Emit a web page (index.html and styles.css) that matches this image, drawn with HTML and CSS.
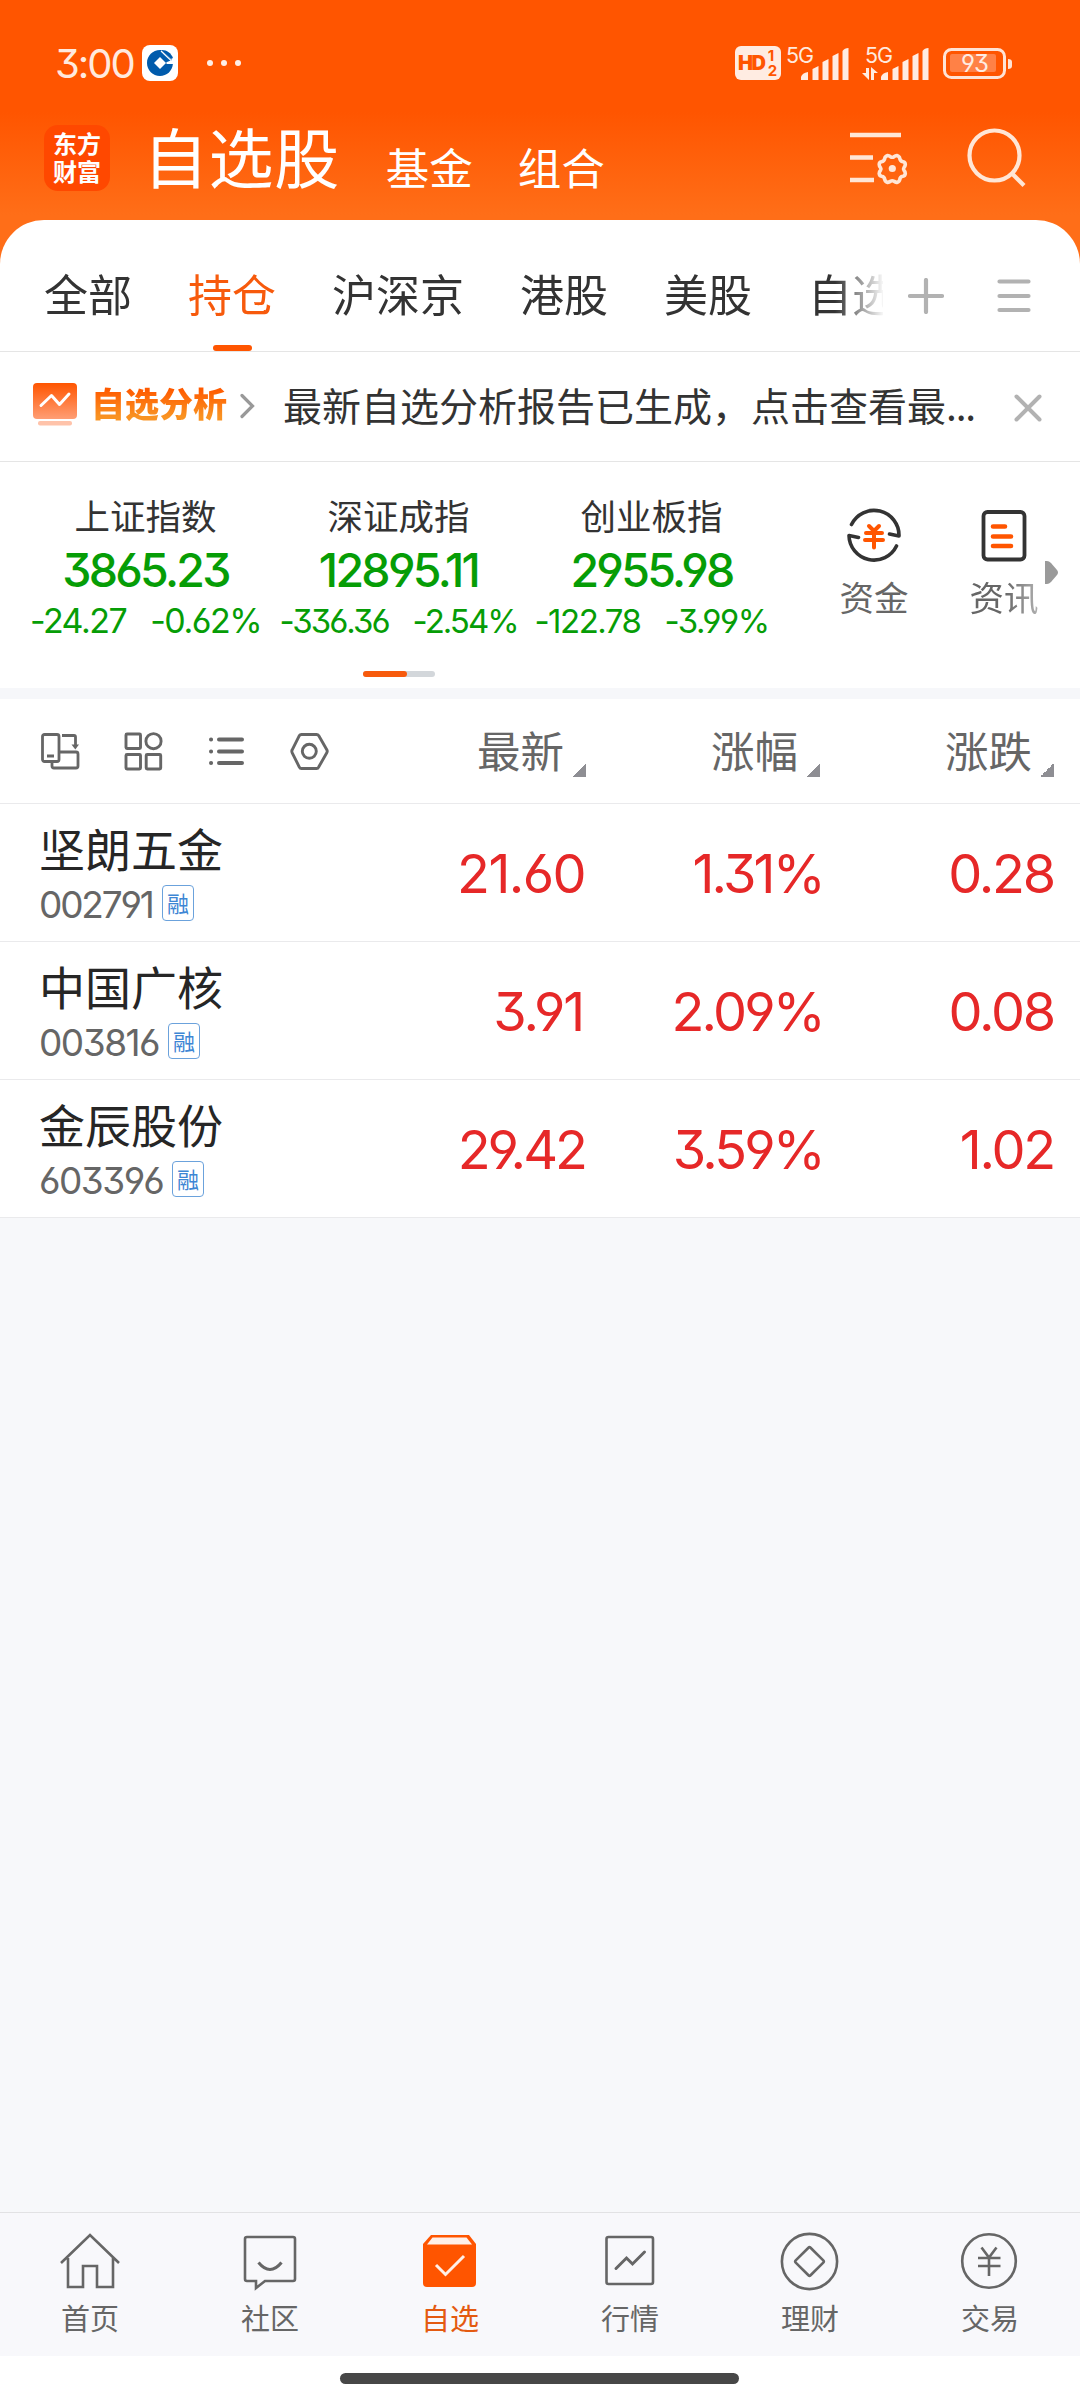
FILE: index.html
```html
<!DOCTYPE html>
<html lang="zh-CN">
<head>
<meta charset="utf-8">
<title>自选股</title>
<link rel="stylesheet" href="styles.css">
</head>
<body>
<div class="app">
  <header class="top">
    <div class="status">
      <span class="clock num">3:00</span>
      <svg class="bank" width="36" height="36" viewBox="0 0 36 36"><rect width="36" height="36" rx="8" fill="#fff"/><path fill="#005bac" d="M18 5C10.800 5 5 10.800 5 18s5.800 13 13 13c6.800 0 12.300-5 12.900-12H25l-1-1 1-1 5-2-11-10z"/><path fill="#005bac" d="M20 5c5 0 9 3 11 8l-2 1-10-9z"/><path d="M19 6l10 9.500" stroke="#fff" stroke-width="1.200"/><path fill="#fff" d="M18 12l6 6-6 6-6-6z"/></svg>
      <svg class="more" width="35" height="6" viewBox="0 0 35 6" fill="#fff" opacity=".9"><circle cx="3" cy="3" r="3"/><circle cx="17" cy="3" r="3"/><circle cx="31" cy="3" r="3"/></svg>
      <div class="signals">
        <div class="hd num"><b>HD</b><span><i>1</i><i>2</i></span></div>
        <div class="net"><span class="num">5G</span><svg width="64" height="34" viewBox="0 0 64 34" fill="#ffece2"><path d="M15 33v-3q1-4 7-5v8zM26.500 33V22l6-3v14zM36.500 33V15l6-3v21zM46.500 33V9l6-3v27zM56.500 33V4q2-3 6-3v32z"/></svg></div>
        <div class="net net2"><span class="num">5G</span><svg width="68" height="34" viewBox="0 0 68 34" fill="#ffece2"><path d="M19 33v-3q1-4 7-5v8zM30.500 33V22l6-3v14zM40.500 33V15l6-3v21zM50.500 33V9l6-3v27zM60.500 33V4q2-3 6-3v32z"/><path d="M4 21h3v12L0 26h4zM9 33h3v-7h4l-7-6z"/></svg></div>
        <svg class="battery" width="70" height="32" viewBox="0 0 70 32"><rect x="1.500" y="1.500" width="60" height="28" rx="7" fill="none" stroke="#ffe3d5" stroke-width="3"/><rect x="7" y="6" width="46" height="18" rx="2" fill="#ff8146"/><path d="M65 11q4 0 4 3v4q0 3-4 3z" fill="#ffe3d5"/><text x="31.500" y="24" text-anchor="middle" class="num pct">93</text></svg>
      </div>
    </div>
    <div class="titlebar">
      <div class="logo"><span>东方</span><span>财富</span></div>
      <h1>自选股</h1>
      <span class="sub s1">基金</span>
      <span class="sub s2">组合</span>
      <svg class="filter" width="60" height="56" viewBox="0 0 60 56" fill="none" stroke="#ffe6d6" stroke-width="4.400"><path d="M0 5h51M0 27.500h23M0 50h24"/><path stroke-width="4" stroke-linejoin="round" d="M37.500 25q1.500 0 3 1.300 2 1.300 4 0 1.500-1.300 3-1.300 3 1 3.300 3 .3 3.500 3.700 4 2.500.5 2.500 3-.2 2-1.500 3.500-1 1.500 0 3 1.500 1.500 1.500 3.500-.2 2.500-2.700 3-3.300.5-3.500 4-.3 2-3.300 3-1.500-.2-3-1.400-2-1.200-4 0-1.500 1.200-3 1.400-3-1-3.300-3-.2-3.500-3.500-4-2.500-.5-2.700-3 0-2 1.500-3.500 1-1.500 0-3-1.500-1.500-1.500-3.500 0-2.500 2.500-3 3.400-.5 3.700-4 .3-2 3.300-3z" transform="translate(4 3) scale(.9)"/><circle cx="42.300" cy="38.500" r="3.600" fill="#ffe6d6" stroke="none"/></svg>
      <svg class="search" width="60" height="60" viewBox="0 0 60 60" fill="none" stroke="#ffe6d6" stroke-width="4.200"><circle cx="27.500" cy="27.500" r="25"/><path d="M44.500 45L57 57.500"/></svg>
    </div>
  </header>

  <main>
    <section class="sheet">
      <nav class="tabs">
        <div class="tablist"><span>全部</span><span class="on">持仓</span><span>沪深京</span><span>港股</span><span>美股</span><span>自选</span></div>
        <svg class="plus" width="36" height="36" viewBox="0 0 36 36" stroke="#b2b2b2" stroke-width="4.200" stroke-linecap="round"><path d="M18 2v32M2 18h32"/></svg>
        <svg class="menu" width="34" height="34" viewBox="0 0 34 34" stroke="#b2b2b2" stroke-width="4.200" stroke-linecap="round"><path d="M2.500 2.500h29M2.500 17h29M2.500 31h29"/></svg>
      </nav>
      <div class="notice">
        <svg width="44" height="43" viewBox="0 0 44 43"><defs><linearGradient id="g" x1="0" y1="0" x2="0" y2="1"><stop offset="0" stop-color="#ff5500"/><stop offset="1" stop-color="#ff9e75"/></linearGradient></defs><rect width="44" height="36" rx="4" fill="url(#g)"/><path d="M8 22.500L18.500 12.500l8 9L36 11" fill="none" stroke="#fff" stroke-width="3" stroke-linecap="round" stroke-linejoin="round"/><rect x="5" y="38" width="34" height="4.500" rx="2" fill="#ffc3aa"/></svg>
        <b>自选分析</b>
        <svg class="chev" width="15" height="26" viewBox="0 0 15 26" fill="none" stroke="#999" stroke-width="3.200" stroke-linecap="round"><path d="M2 2.500L12.500 13 2 23.500"/></svg>
        <span class="msg">最新自选分析报告已生成，点击查看最<i>...</i></span>
        <svg class="close" width="28" height="28" viewBox="0 0 28 28" stroke="#b2b2b2" stroke-width="4" stroke-linecap="round"><path d="M2.500 2.500l23 23M25.500 2.500l-23 23"/></svg>
      </div>
      <div class="market">
        <div class="indices">
          <div class="index"><h3>上证指数</h3><strong class="num">3865.23</strong><p class="num"><span>-24.27</span><span>-0.62%</span></p></div>
          <div class="index"><h3>深证成指</h3><strong class="num">12895.11</strong><p class="num sm tight"><span>-336.36</span><span>-2.54%</span></p></div>
          <div class="index"><h3>创业板指</h3><strong class="num">2955.98</strong><p class="num sm"><span>-122.78</span><span>-3.99%</span></p></div>
          <div class="pager"><i></i></div>
        </div>
        <div class="quick">
          <svg width="54" height="56" viewBox="0 0 54 56" fill="none" stroke="#333" stroke-width="3.600" stroke-linejoin="round" stroke-linecap="round"><path d="M4.500 17.500A25 25 0 0 1 52 29l-9.500-2M49.500 39A25 25 0 0 1 2 28.500l9.500 2"/><g stroke="#ff5500" stroke-width="4"><path d="M22 19l5 5 5-5M19 26h16M18 33h18M27 25v15.500"/></g></svg>
          <span>资金</span>
        </div>
        <div class="quick news">
          <svg width="54" height="56" viewBox="0 0 54 56" fill="none" stroke="#333" stroke-width="3.800"><rect x="6.500" y="5" width="41" height="47.500" rx="4"/><path stroke="#ff5500" stroke-width="4.600" stroke-linecap="round" d="M16 19.500h12M16 29.500h18M16 39h18"/></svg>
          <span>资讯</span>
        </div>
        <svg class="next" width="13" height="23" viewBox="0 0 13 23" fill="#9a9a9a"><path d="M0 0h2q2 0 4 2l6 7q2 2.500 0 5l-6 7q-2 2-4 2H0z"/></svg>
      </div>
    </section>

    <section class="table">
      <div class="thead">
        <div class="tools">
          <svg width="39" height="39" viewBox="0 0 39 39" fill="none" stroke="#666" stroke-width="2.800"><rect x="1.500" y="2.500" width="16.500" height="27" rx="2"/><path d="M6 24h7M11 30v4q0 2 2 2h22q2 0 2-2V22q0-2-2-2H18M21 3.500h12q1.500 0 1.500 1.500v10"/><path d="M30.500 12.500h7.500l-3.700 5z" fill="#666" stroke="none"/></svg>
          <svg width="39" height="39" viewBox="0 0 39 39" fill="none" stroke="#666" stroke-width="2.900"><rect x="2" y="2" width="14.500" height="14.500" rx="1"/><circle cx="29.500" cy="9.200" r="7.600"/><rect x="2" y="22.500" width="14.500" height="14.500" rx="1"/><rect x="22.200" y="22.500" width="14.500" height="14.500" rx="1"/></svg>
          <svg width="39" height="39" viewBox="0 0 39 39" stroke="#666" stroke-width="4" stroke-linecap="round"><path d="M12 7.500h23M12 19.500h23M12 31h23M4 7.500h.1M4 19.500h.1M4 31h.1"/></svg>
          <svg width="39" height="39" viewBox="0 0 39 39" fill="none" stroke="#666" stroke-width="2.900" stroke-linejoin="round"><path d="M11.500 2.500h15q1.500 0 2.300 1.300l8 14q.9 1.500 0 3l-8 14q-.8 1.700-2.300 1.700h-15q-1.500 0-2.300-1.700l-7-14q-.8-1.500 0-3l7-14q.8-1.300 2.300-1.300z"/><circle cx="19.300" cy="19.300" r="7"/></svg>
        </div>
        <span class="col">最新</span><span class="col">涨幅</span><span class="col">涨跌</span>
      </div>
      <div class="row"><div class="stock"><h2>坚朗五金</h2><div class="code"><span class="num c1">002791</span><em>融</em></div></div><span class="val num v1">21.60</span><span class="val num pc">1.31%</span><span class="val num">0.28</span></div>
      <div class="row"><div class="stock"><h2>中国广核</h2><div class="code"><span class="num c2">003816</span><em>融</em></div></div><span class="val num v2">3.91</span><span class="val num pc">2.09%</span><span class="val num">0.08</span></div>
      <div class="row"><div class="stock"><h2>金辰股份</h2><div class="code"><span class="num c3">603396</span><em>融</em></div></div><span class="val num v3">29.42</span><span class="val num pc">3.59%</span><span class="val num">1.02</span></div>
    </section>
  </main>

  <nav class="bottom">
    <a><svg width="60" height="60" viewBox="0 0 60 60"><path d="M1 31L30 3l29 28M8 26v29h15V34h14v21h16V26"/></svg>首页</a>
    <a><svg width="60" height="60" viewBox="0 0 60 60"><path d="M7 5h46q2 0 2 2v40q0 2-2 2H25l-9 7v-7H7q-2 0-2-2V7q0-2 2-2z"/><path d="M18.500 30.500q11.500 14 23 0" stroke-width="3"/></svg>社区</a>
    <a class="on"><svg width="60" height="60" viewBox="0 0 60 60"><path d="M3 12L11 3h38l7 9v39q0 4-4 4H7q-4 0-4-4z" fill="#ff5500" stroke="none"/><path d="M12.500 5.500h34l5.500 7H7z" fill="#fff0e8" stroke="none"/><path d="M16 33l9.500 9.500L44 24" stroke="#fff0e8" stroke-width="3"/></svg>自选</a>
    <a><svg width="60" height="60" viewBox="0 0 60 60"><rect x="6.500" y="5" width="46.500" height="47" rx="2"/><path d="M16 36.500L26.500 26l6 6L44.500 20" stroke-width="3" stroke-linecap="round"/></svg>行情</a>
    <a><svg width="60" height="60" viewBox="0 0 60 60"><circle cx="29.500" cy="29.500" r="27.600"/><rect x="19" y="19" width="21" height="21" rx="1.500" transform="rotate(45 29.500 29.500)"/></svg>理财</a>
    <a><svg width="60" height="60" viewBox="0 0 60 60"><circle cx="29" cy="29" r="26.800"/><path d="M21.500 15.500l7.500 10 7.500-10M18 26h22.500M18 34h22.500M29 25.500V44"/></svg>交易</a>
  </nav>
  <div class="home"><i></i></div>
</div>
</body>
</html>
```

FILE: styles.css
```css
* { box-sizing: border-box; margin: 0; padding: 0; }
body { width: 1080px; background: #fff; font-family: "Noto Sans CJK SC", sans-serif; color: #333; }
i, em { font-style: normal; }
svg { display: block; flex: none; }
.num { font-family: Inter, "Noto Sans CJK SC", sans-serif; font-feature-settings: "cv03", "cv04", "cv09"; }
.app { width: 1080px; height: 2400px; display: flex; flex-direction: column; background: #f7f8fa; overflow: hidden; }

.top { height: 270px; flex: none; background: linear-gradient(#ff5500 0, #ff5500 112px, #ff6e18 215px, #ff6e18 270px); }
.status { height: 115px; display: flex; padding: 0 67px 0 55px; color: #ffe9de; }
.clock { font-size: 40px; line-height: 48px; margin-top: 40px; width: 87px; letter-spacing: -2px; }
.bank { margin-top: 45px; }
.more { margin: 60px 0 0 29px; }
.signals { margin-left: auto; display: flex; align-items: flex-start; padding-top: 46px; }
.hd { width: 46px; height: 34px; border-radius: 6px; background: #ffece2; color: #ff5500; display: flex; align-items: center; padding-left: 3px; font-size: 20px; font-weight: 700; letter-spacing: -1.400px; margin-right: 5px; }
.hd span { display: flex; flex-direction: column; font-size: 15px; line-height: 15px; margin-left: 3px; }
.hd i { display: block; }
.net { display: grid; margin-right: 12px; height: 34px; }
.net > * { grid-area: 1 / 1; }
.net span { font-size: 21.500px; line-height: 18px; letter-spacing: -1px; }
.net svg { margin-top: 1px; }
.net2 { margin-right: 13px; }
.net2 span { padding-left: 3px; }
.battery { margin-top: 2px; }
.pct { font-size: 24px; fill: #ffece2; letter-spacing: -1px; }
.titlebar { display: flex; align-items: flex-start; height: 105px; padding: 0 53px 0 44px; color: #fff; }
.logo { width: 66px; height: 66px; margin-top: 10px; border-radius: 14px; background: #ff4800; font-size: 24px; line-height: 28px; font-weight: 700; text-align: center; padding-top: 4px; }
.logo span { display: block; height: 28px; }
h1 { font-size: 65px; line-height: 80px; font-weight: 400; letter-spacing: .6px; margin: 0 0 0 33px; }
.sub { font-size: 43.500px; line-height: 60px; margin-top: 22px; }
.s1 { margin-left: 46px; }
.s2 { margin-left: 45px; }
.filter { margin: 15px 0 0 auto; }
.search { margin: 13px 0 0 57px; }

main { flex: 1; margin-top: -50px; }
.sheet { background: #fff; border-radius: 44px 44px 0 0; }
.tabs { height: 132px; display: flex; border-bottom: 1px solid #e5e5e5; }
.tablist { width: 883px; padding-left: 44px; display: flex; gap: 56px; overflow: hidden; white-space: nowrap; font-size: 44px; line-height: 64px; padding-top: 41px; -webkit-mask-image: linear-gradient(90deg, #000 835px, transparent 885px); mask-image: linear-gradient(90deg, #000 835px, transparent 885px); }
.tablist span { flex: none; height: 90px; }
.tablist .on { color: #f75a0c; display: flex; flex-direction: column; align-items: center; }
.tablist .on::after { content: ""; width: 39px; height: 6px; border-radius: 3px; background: #ff5500; margin-top: 20px; }
.plus { margin: 58px 0 0 25px; }
.menu { margin: 59px 0 0 53px; }
.notice { height: 110px; display: flex; border-bottom: 1px solid #e5e5e5; padding: 31px 38px 0 33px; }
.notice b { font-size: 34px; font-weight: 900; line-height: 46px; margin: -3px 0 0 14px; height: 46px; background: linear-gradient(#ff5a00 20%, #f99322 80%); -webkit-background-clip: text; background-clip: text; color: transparent; }
.chev { margin: 10px 0 0 13px; }
.msg { font-size: 39px; line-height: 50px; margin: -4px 0 0 28px; white-space: nowrap; }
.msg i { letter-spacing: -1.200px; }
.close { margin: 11px 0 0 auto; }
.market { height: 226px; display: flex; }
.indices { width: 779px; padding-left: 19px; display: grid; grid-template-columns: repeat(3, 253px); grid-template-rows: 209px 6px; color: #069d06; }
.index { text-align: center; padding-top: 26px; }
h3 { font-size: 35.500px; line-height: 54px; font-weight: 400; color: #333; }
.index strong { display: block; font-size: 46.500px; line-height: 57px; font-weight: 550; letter-spacing: -2.700px; }
.index p { display: flex; justify-content: center; gap: 24px; font-size: 34px; line-height: 44px; letter-spacing: -1.500px; }
.index .sm { font-size: 33px; }
.index .tight { letter-spacing: -2px; }
.pager { grid-column: 1 / 4; justify-self: center; width: 72px; height: 6px; border-radius: 3px; background: #d3d7db; }
.pager i { display: block; width: 44px; height: 6px; border-radius: 3px; background: #f75a0c; }
.quick { width: 130px; margin-left: 30px; display: flex; flex-direction: column; align-items: center; font-size: 34.500px; line-height: 50px; color: #666; padding-top: 45px; }
.quick span { margin-top: 8px; }
.news { margin-left: 0; }
.news span { -webkit-mask-image: linear-gradient(90deg, #000 50%, rgba(0,0,0,.5)); mask-image: linear-gradient(90deg, #000 50%, rgba(0,0,0,.5)); }
.next { margin: 99px 0 0 -24px; }

.table { background: #fff; border-top: 11px solid #f6f7fa; }
.thead { height: 105px; display: flex; border-bottom: 1px solid #eaeaec; padding-top: 32px; color: #666; }
.tools { width: 352px; padding: 1px 0 0 41px; display: flex; gap: 44px; }
.col { width: 234px; text-align: right; padding-right: 22px; font-size: 43.500px; line-height: 37px; height: 46px; background: linear-gradient(135deg, transparent 50%, #8e8e93 50%) no-repeat right bottom / 14px 14px; }
.row { height: 138px; display: flex; align-items: center; border-bottom: 1px solid #eaeaec; color: #e62828; }
.stock { width: 352px; padding-left: 39px; height: 137px; padding-top: 12px; }
h2 { font-size: 46px; line-height: 62px; font-weight: 400; color: #262626; }
.code { display: flex; color: #666; margin-top: 7px; }
.code .num { font-size: 37px; line-height: 37px; letter-spacing: -1.500px; margin-top: 1px; }
.c1 { width: 123px; } .c2 { width: 129px; } .c3 { width: 133px; }
.code .c1 { letter-spacing: -2.200px; }
.code em { width: 32px; height: 36px; border: 1px solid #6ba2dc; border-radius: 4px; color: #3d86d4; font-size: 22px; line-height: 32px; text-align: center; }
.val { width: 234px; text-align: right; font-size: 54px; letter-spacing: -2.200px; padding-top: 1px; }
.v1 { letter-spacing: -1.600px; }
.v1, .v2, .v3 { padding-right: 1px; }
.v2 { padding-right: 3px; }
.v3 { letter-spacing: -3px; }
.pc { letter-spacing: -2.800px; margin: 0 -3px 0 3px; }

.bottom { height: 144px; flex: none; display: flex; background: #f8f8fb; border-top: 1px solid #e2e2e4; }
.bottom a { width: 180px; display: flex; flex-direction: column; align-items: center; font-size: 29px; line-height: 40px; color: #666; padding-top: 19px; gap: 5px; }
.bottom svg { fill: none; stroke: #666; stroke-width: 2.600; }
.bottom .on { color: #e45a10; }
.home { height: 44px; flex: none; background: #fff; padding: 17px 0 0 340px; }
.home i { display: block; width: 399px; height: 11px; border-radius: 6px; background: #474747; }
```
